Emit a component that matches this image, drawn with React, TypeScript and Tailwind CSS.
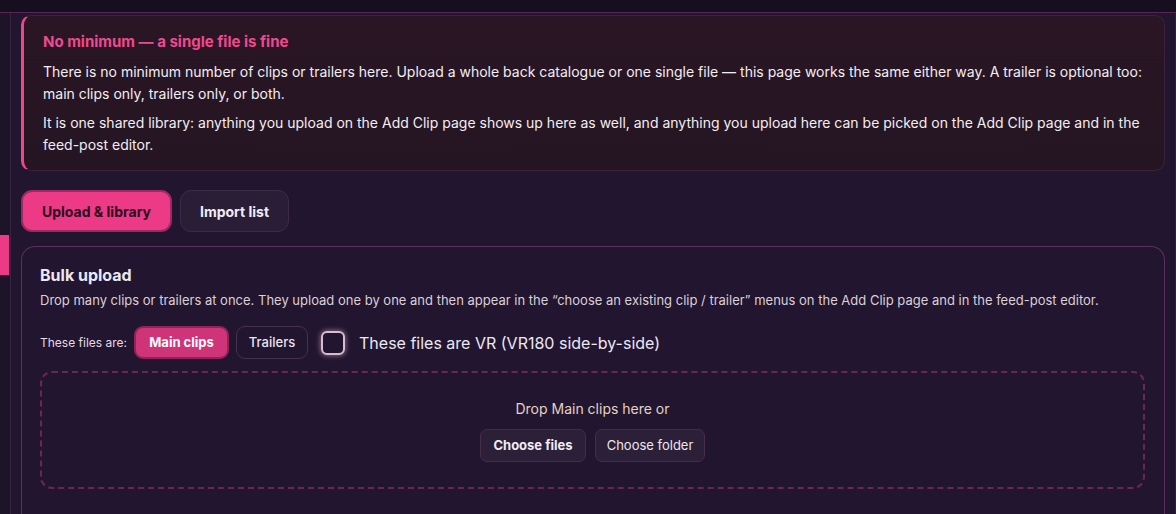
const InfoCard = () => (
  <div className="rounded-[10px] border border-[#3b2236] border-l-[3px] border-l-[#ec4889] bg-gradient-to-b from-[#2a1524] to-[#251522] pl-[19px] pr-[19px] pt-[16px] pb-[14px]">
    <h3 className="text-[15px] leading-[20px] font-bold text-[#ee4a8f]">No minimum — a single file is fine</h3>
    <p className="mt-[9px] text-[14px] leading-[22px] text-[#f3eef2]">
      There is no minimum number of clips or trailers here. Upload a whole back catalogue or one single file — this page works the same either way. A trailer is optional too: main clips only, trailers only, or both.
    </p>
    <p className="mt-[7px] text-[14px] leading-[22px] text-[#f3eef2]">
      It is one shared library: anything you upload on the Add Clip page shows up here as well, and anything you upload here can be picked on the Add Clip page and in the feed-post editor.
    </p>
  </div>
);

const Tabs = () => (
  <div className="flex gap-[8px] mt-[19px]">
    <button className="h-[42px] w-[151px] rounded-[11px] border-2 border-[#9a2a61] bg-[#ec3a87] text-[14px] font-bold text-[#2b0c1d]">
      Upload &amp; library
    </button>
    <button className="h-[42px] w-[109px] rounded-[11px] border border-[#3e2a48] bg-[#2a1e37] text-[14px] font-bold text-[#f1ecf4]">
      Import list
    </button>
  </div>
);

const BulkUpload = () => (
  <div className="mt-[14px] flex-1 rounded-t-[14px] border border-b-0 border-[#5a3158] bg-[#22152f] pl-[18px] pr-[19px] pt-[17px]">
    <h2 className="text-[16px] leading-[22px] font-bold text-[#ebe8f2]">Bulk upload</h2>
    <p className="mt-[5px] text-[13px] leading-[18px] text-[#dccfd6]">
      Drop many clips or trailers at once. They upload one by one and then appear in the “choose an existing clip / trailer” menus on the Add Clip page and in the feed-post editor.
    </p>
    <div className="mt-[17px] flex items-center h-[33px]">
      <span className="text-[12px] text-[#e6dbe2]">These files are:</span>
      <button className="ml-[7px] h-[33px] w-[95px] rounded-[9px] border-2 border-[#8e2458] bg-[#cf3378] text-[13px] font-bold text-white">
        Main clips
      </button>
      <button className="ml-[7px] h-[33px] w-[72px] rounded-[9px] border border-[#45314f] bg-[#22152f] text-[13px] font-medium text-[#ece4ee]">
        Trailers
      </button>
      <span className="ml-[13px] w-[24px] h-[24px] rounded-[6px] border-2 border-[#d9bccd] bg-[#22152f] shadow-[0_0_5px_1px_rgba(230,190,215,0.45)]" />
      <span className="ml-[14px] text-[16px] text-[#ece8f2]">These files are VR (VR180 side-by-side)</span>
    </div>
    <div className="mt-[12px] h-[118px] rounded-[12px] border-2 border-dashed border-[#6c2655] flex flex-col items-center pt-[26px]">
      <span className="text-[14px] leading-[20px] text-[#e4d2c3]">Drop Main clips here or</span>
      <div className="mt-[10px] flex gap-[9px]">
        <button className="h-[33px] w-[106px] rounded-[7px] border border-[#4a2b47] bg-[#2c1f38] text-[13px] font-bold text-[#f1ecf4]">
          Choose files
        </button>
        <button className="h-[33px] w-[110px] rounded-[7px] border border-[#4a2b47] bg-[#2c1f38] text-[13px] text-[#ece6ef]">
          Choose folder
        </button>
      </div>
    </div>
  </div>
);

export default function App() {
  return (
    <div className="w-[1176px] h-[514px] overflow-hidden bg-[#22152f] flex flex-col font-['Inter',sans-serif]">
      <div className="h-[13px] shrink-0 bg-[#150f1f] border-b border-[#5b2552]" />
      <div className="flex flex-1 min-h-0">
        <div className="relative w-[11px] shrink-0 bg-[#1e1429] border-r border-[#3a2440]">
          <div className="absolute left-0 top-[222px] w-[9px] h-[40px] bg-[#ec3a87]" />
        </div>
        <main className="flex-1 min-w-0 flex flex-col pl-[10px] pr-[10px] pt-[2px] border-r border-[#2f2038]">
          <InfoCard />
          <Tabs />
          <BulkUpload />
        </main>
      </div>
    </div>
  );
}
